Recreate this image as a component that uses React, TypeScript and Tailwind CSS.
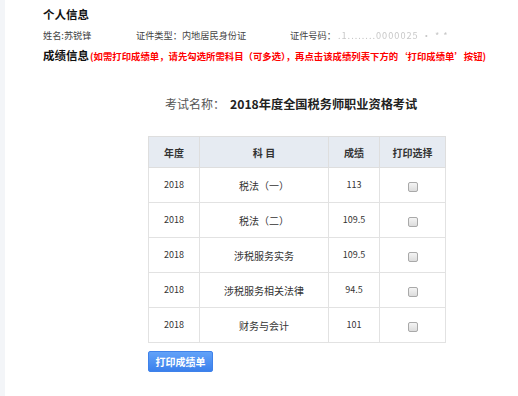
const rows = [
  { year: "2018", subject: "税法（一）", score: "113" },
  { year: "2018", subject: "税法（二）", score: "109.5" },
  { year: "2018", subject: "涉税服务实务", score: "109.5" },
  { year: "2018", subject: "涉税服务相关法律", score: "94.5" },
  { year: "2018", subject: "财务与会计", score: "101" },
];

const font = "font-['SimSun','Noto_Sans_CJK_SC','Liberation_Sans',sans-serif]";

export default function App() {
  return (
    <div className={`flex w-[518px] h-[396px] bg-white overflow-hidden ${font}`}>
      <div className="w-[5px] shrink-0 bg-[#f3f5f8]" />
      <div className="flex flex-col pl-[38px] pt-[6px]">
        <h2 className="text-[11.5px] leading-[16px] font-bold text-[#111]">个人信息</h2>

        <div className="flex mt-[6px] text-[9.2px] leading-[14px] text-[#444]">
          <span className="w-[93px]">姓名:苏锐锋</span>
          <span className="w-[154px]">证件类型：内地居民身份证</span>
          <span>证件号码：</span>
          <span className="ml-[2px] text-[#c8c8c8] blur-[0.6px] tracking-[1px]">.1........0000025 · * *</span>
        </div>

        <div className="flex items-baseline mt-[5px] leading-[16px]">
          <span className="text-[11.5px] font-bold text-[#111]">成绩信息</span>
          <span className="ml-[1px] text-[9.4px] font-bold text-[#f00] whitespace-nowrap">
            (如需打印成绩单，请先勾选所需科目（可多选），再点击该成绩列表下方的‘打印成绩单’按钮)
          </span>
        </div>

        <div className="mt-[31px] ml-[122px] flex items-center leading-[18px] whitespace-nowrap">
          <span className="text-[12px] text-[#555]">考试名称：</span>
          <span className="ml-[5px] text-[12.2px] font-bold text-[#222]">2018年度全国税务师职业资格考试</span>
        </div>

        <table className="mt-[23px] ml-[105px] w-[297px] border-collapse table-fixed text-center">
          <colgroup>
            <col className="w-[51px]" />
            <col className="w-[129px]" />
            <col className="w-[51px]" />
            <col className="w-[66px]" />
          </colgroup>
          <thead>
            <tr className="h-[31px] bg-[#e6ebf2] text-[10px] font-bold text-[#333]">
              <th className="border border-[#dedede]">年度</th>
              <th className="border border-[#dedede]">科 目</th>
              <th className="border border-[#dedede]">成绩</th>
              <th className="border border-[#dedede]">打印选择</th>
            </tr>
          </thead>
          <tbody>
            {rows.map((r, i) => (
              <tr key={i} className="h-[35px] text-[9px] text-[#333]">
                <td className="border border-[#e2e2e2]">{r.year}</td>
                <td className="border border-[#e2e2e2] text-[10px]">{r.subject}</td>
                <td className="border border-[#e2e2e2]">{r.score}</td>
                <td className="border border-[#e2e2e2]">
                  <span className="inline-block align-middle mt-[2px] w-[10px] h-[10px] rounded-[2px] border border-[#a9a9a9] bg-gradient-to-b from-[#f4f4f4] to-[#dcdcdc]" />
                </td>
              </tr>
            ))}
          </tbody>
        </table>

        <button className="mt-[8px] ml-[105px] w-[65px] h-[21px] rounded-[2px] border border-[#3f82ea] bg-gradient-to-b from-[#62a2f8] to-[#3b80ec] text-[10px] font-bold text-white leading-none">
          打印成绩单
        </button>
      </div>
    </div>
  );
}
